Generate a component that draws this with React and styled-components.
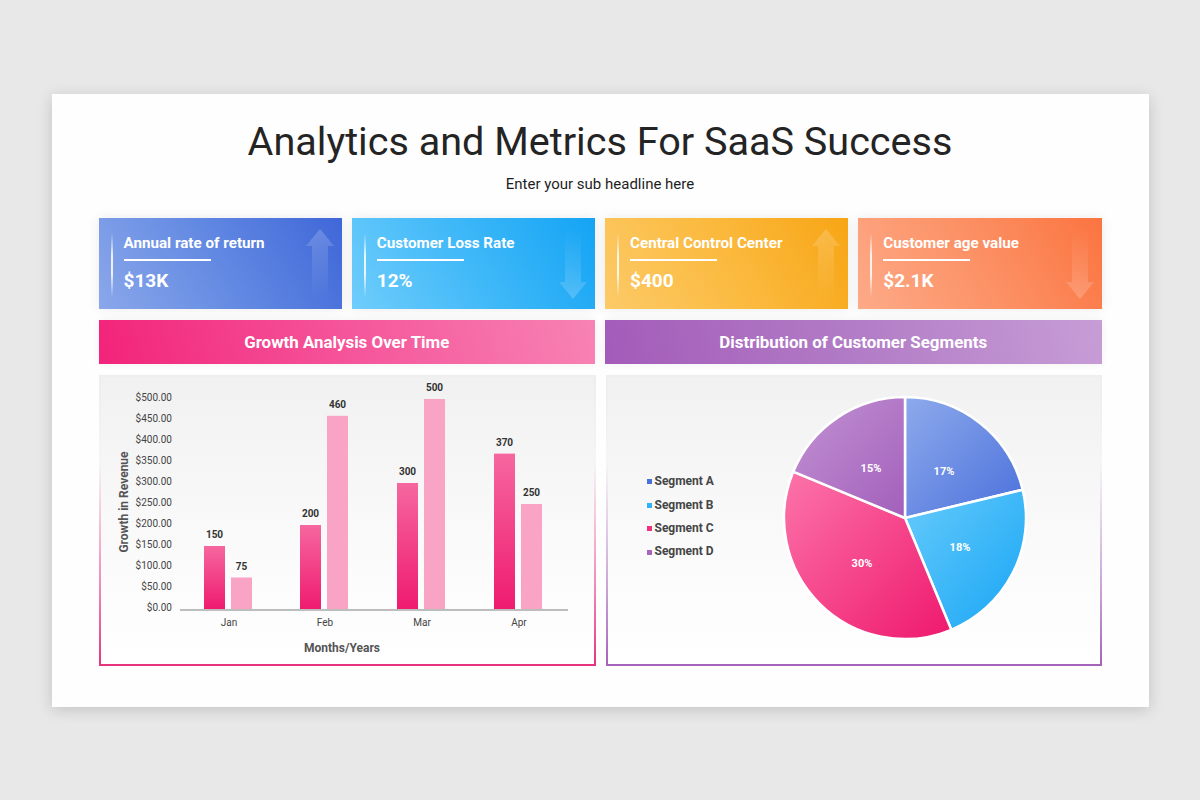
import React from "react";
import styled, { createGlobalStyle } from "styled-components";

const Global = createGlobalStyle`
  html, body { margin: 0; padding: 0; }
  body { background: #e9e8e9; font-family: Roboto, "Noto Sans", "Liberation Sans", sans-serif; }
`;

const Page = styled.div`
  width: 1200px;
  height: 800px;
  display: flex;
  align-items: center;
  justify-content: center;
`;

const Slide = styled.div`
  width: 1097px;
  height: 613px;
  background: #fefefe;
  box-shadow: 0 3px 14px rgba(0, 0, 0, 0.16);
  box-sizing: border-box;
  padding: 24px 47px 0 47px;
  display: flex;
  flex-direction: column;
`;

const Title = styled.h1`
  margin: 0;
  text-align: center;
  font-size: 39.6px;
  line-height: 48px;
  font-weight: 400;
  color: #242424;
`;

const Sub = styled.p`
  margin: 8px 0 0;
  text-align: center;
  font-size: 15px;
  line-height: 20px;
  color: #1e1e1e;
`;

const Cards = styled.div`
  margin-top: 24px;
  display: grid;
  grid-template-columns: repeat(4, 1fr);
  gap: 10px;
`;

const Card = styled.div`
  height: 91px;
  background: ${(p) => p.$bg};
  box-shadow: 0 0 12px rgba(0, 0, 0, 0.08);
  display: flex;
  align-items: flex-start;
  padding: 0 8px 0 12px;
  box-sizing: border-box;
  color: #fff;
`;

const Accent = styled.div`
  width: 2px;
  height: 64px;
  margin-top: 15px;
  margin-right: 11px;
  background: linear-gradient(to bottom, rgba(255,255,255,0), rgba(255,255,255,0.85) 35%, rgba(255,255,255,0.85) 65%, rgba(255,255,255,0));
`;

const CardBody = styled.div`
  flex: 1;
  padding-top: 16px;
`;

const CardTitle = styled.div`
  font-size: 15.2px;
  font-weight: 700;
  line-height: 18px;
`;

const Rule = styled.div`
  width: 87px;
  height: 2px;
  background: #fff;
  margin-top: 7px;
`;

const CardValue = styled.div`
  font-size: 19px;
  font-weight: 700;
  line-height: 22px;
  margin-top: 9px;
`;

const ArrowBox = styled.svg`
  margin-top: 11px;
  flex: none;
`;

const Row = styled.div`
  display: grid;
  grid-template-columns: 1fr 1fr;
  gap: 10px;
  margin-top: 11px;
`;

const Banner = styled.div`
  height: 44px;
  background: ${(p) => p.$bg};
  color: #fff;
  font-size: 16.9px;
  font-weight: 700;
  display: flex;
  align-items: center;
  justify-content: center;
  box-shadow: 0 0 8px rgba(0, 0, 0, 0.06);
`;

const Panel = styled.div`
  height: 291px;
  box-sizing: border-box;
  border: 2px solid transparent;
  border-image: linear-gradient(to top, ${(p) => p.$c} 0%, ${(p) => p.$c}99 25%, ${(p) => p.$c}00 70%, #eeeeee 100%) 1;
  background: linear-gradient(to bottom, #f1f1f1 0%, #f9f9f9 50%, #ffffff 100%);
  display: flex;
`;

const ChartSvg = styled.svg`
  display: block;
  font-family: Roboto, "Noto Sans", sans-serif;
`;

const Legend = styled.ul`
  list-style: none;
  margin: 0 0 6px;
  padding: 0 0 0 39px;
  width: 172px;
  box-sizing: border-box;
  align-self: center;
`;

const LegendItem = styled.li`
  display: flex;
  align-items: center;
  gap: 3px;
  font-size: 12px;
  font-weight: 700;
  color: #454545;
  line-height: 23.4px;
  &::before {
    content: "";
    width: 5px;
    height: 5px;
    background: ${(p) => p.$c};
  }
`;

const PieSvg = styled.svg`
  display: block;
  margin-top: 16px;
  flex: none;
`;

function Arrow({ dir, id }) {
  const up = dir === "up";
  return (
    <ArrowBox width="28" height="70" viewBox="0 0 28 70">
      <defs>
        <linearGradient id={id} x1="0" y1={up ? "0" : "1"} x2="0" y2={up ? "1" : "0"}>
          <stop offset="0" stopColor="#fff" stopOpacity="0.2" />
          <stop offset="0.45" stopColor="#fff" stopOpacity="0.1" />
          <stop offset="1" stopColor="#fff" stopOpacity="0" />
        </linearGradient>
      </defs>
      <path
        d={up ? "M14 0 L28 17 L22 17 L22 70 L6 70 L6 17 L0 17 Z" : "M14 70 L28 53 L22 53 L22 0 L6 0 L6 53 L0 53 Z"}
        fill={`url(#${id})`}
      />
    </ArrowBox>
  );
}

const cards = [
  { t: "Annual rate of return", v: "$13K", bg: "linear-gradient(60deg, #8aa7ea 0%, #6289e2 50%, #3f67d8 100%)", dir: "up" },
  { t: "Customer Loss Rate", v: "12%", bg: "linear-gradient(60deg, #6fcdfb 0%, #3fb8f8 50%, #14a4f4 100%)", dir: "down" },
  { t: "Central Control Center", v: "$400", bg: "linear-gradient(60deg, #fcca68 0%, #fbba3f 50%, #f7a515 100%)", dir: "up" },
  { t: "Customer age value", v: "$2.1K", bg: "linear-gradient(60deg, #fdaa88 0%, #fc9165 50%, #fb7440 100%)", dir: "down" },
];

const months = [
  { m: "Jan", a: 150, b: 75, cx: 129 },
  { m: "Feb", a: 200, b: 460, cx: 225 },
  { m: "Mar", a: 300, b: 500, cx: 322 },
  { m: "Apr", a: 370, b: 250, cx: 419 },
];

function BarChart() {
  const base = 234;
  const k = 0.42;
  const ticks = [0, 50, 100, 150, 200, 250, 300, 350, 400, 450, 500];
  return (
    <ChartSvg width="493" height="287" viewBox="0 0 493 287">
      <defs>
        <linearGradient id="barDark" x1="0" y1="0" x2="0" y2="1">
          <stop offset="0" stopColor="#f6679f" />
          <stop offset="1" stopColor="#ef1b70" />
        </linearGradient>
      </defs>
      {ticks.map((t) => (
        <text key={t} x="71" y={base - t * k} textAnchor="end" fontSize="10" fill="#444">
          ${t}.00
        </text>
      ))}
      <text
        transform="translate(27 125) rotate(-90)"
        textAnchor="middle"
        fontSize="12"
        fontWeight="700"
        fill="#555"
      >
        Growth in Revenue
      </text>
      {months.map((d) => {
        const ha = d.a * k;
        const hb = d.b * k;
        const xa = d.cx - 26;
        const xb = d.cx + 1;
        return (
          <g key={d.m}>
            <rect x={xa} y={base - ha - 2} width="21" height={ha} fill="url(#barDark)" />
            <rect x={xb} y={base - hb - 2} width="21" height={hb} fill="#f9a3c5" />
            <text x={xa + 10.5} y={base - ha - 10} textAnchor="middle" fontSize="10" fontWeight="700" fill="#333">
              {d.a}
            </text>
            <text x={xb + 10.5} y={base - hb - 10} textAnchor="middle" fontSize="10" fontWeight="700" fill="#333">
              {d.b}
            </text>
            <text x={d.cx - 1} y={249} textAnchor="middle" fontSize="10" fill="#444">
              {d.m}
            </text>
          </g>
        );
      })}
      <line x1="79" x2="467" y1={base - 1} y2={base - 1} stroke="#bdbdbd" strokeWidth="2" />
      <text x="241" y="275" textAnchor="middle" fontSize="12" fontWeight="700" fill="#555">
        Months/Years
      </text>
    </ChartSvg>
  );
}

const segs = [
  { n: "Segment A", v: 17, c1: "#8eaaec", c2: "#4a70db", lx: 39, ly: -47, key: "#4a70db" },
  { n: "Segment B", v: 18, c1: "#66cbfb", c2: "#18a5f5", lx: 55, ly: 29, key: "#2fb2f6" },
  { n: "Segment C", v: 30, c1: "#fc74aa", c2: "#ef186d", lx: -43, ly: 45, key: "#f0317f" },
  { n: "Segment D", v: 15, c1: "#c393d3", c2: "#a25fbb", lx: -34, ly: -50, key: "#a965bd" },
];

function Pie() {
  const cx = 125, cy = 125, r = 121;
  const total = segs.reduce((s, d) => s + d.v, 0);
  let acc = 0;
  const pt = (a) => [cx + r * Math.sin(a), cy - r * Math.cos(a)];
  return (
    <PieSvg width="250" height="250" viewBox="0 0 250 250">
      <defs>
        {segs.map((s, i) => (
          <linearGradient key={i} id={`pg${i}`} x1="0" y1="0" x2="1" y2="1">
            <stop offset="0" stopColor={s.c1} />
            <stop offset="1" stopColor={s.c2} />
          </linearGradient>
        ))}
      </defs>
      {segs.map((s, i) => {
        const a0 = (acc / total) * Math.PI * 2;
        acc += s.v;
        const a1 = (acc / total) * Math.PI * 2;
        const [x0, y0] = pt(a0);
        const [x1, y1] = pt(a1);
        const large = a1 - a0 > Math.PI ? 1 : 0;
        return (
          <path
            key={i}
            d={`M${cx} ${cy} L${x0} ${y0} A${r} ${r} 0 ${large} 1 ${x1} ${y1} Z`}
            fill={`url(#pg${i})`}
            stroke="#fff"
            strokeWidth="2.5"
            strokeLinejoin="round"
          />
        );
      })}
      {segs.map((s, i) => (
        <text
          key={i}
          x={cx + s.lx}
          y={cy + s.ly + 4}
          textAnchor="middle"
          fontSize="11"
          fontWeight="700"
          fill="#fff"
          fontFamily="Roboto, sans-serif"
        >
          {s.v}%
        </text>
      ))}
    </PieSvg>
  );
}

export default function App() {
  return (
    <>
      <Global />
      <Page>
        <Slide>
          <Title>Analytics and Metrics For SaaS Success</Title>
          <Sub>Enter your sub headline here</Sub>
          <Cards>
            {cards.map((c, i) => (
              <Card key={i} $bg={c.bg}>
                <Accent />
                <CardBody>
                  <CardTitle>{c.t}</CardTitle>
                  <Rule />
                  <CardValue>{c.v}</CardValue>
                </CardBody>
                <Arrow dir={c.dir} id={`ar${i}`} />
              </Card>
            ))}
          </Cards>
          <Row>
            <Banner $bg="linear-gradient(75deg, #f2237a 0%, #f5559a 50%, #f783b4 100%)">Growth Analysis Over Time</Banner>
            <Banner $bg="linear-gradient(75deg, #a35bb9 0%, #b27cc6 50%, #c79dd6 100%)">Distribution of Customer Segments</Banner>
          </Row>
          <Row>
            <Panel $c="#e8337f">
              <BarChart />
            </Panel>
            <Panel $c="#a563ba">
              <Legend>
                {segs.map((s) => (
                  <LegendItem key={s.n} $c={s.key}>{s.n}</LegendItem>
                ))}
              </Legend>
              <Pie />
            </Panel>
          </Row>
        </Slide>
      </Page>
    </>
  );
}
